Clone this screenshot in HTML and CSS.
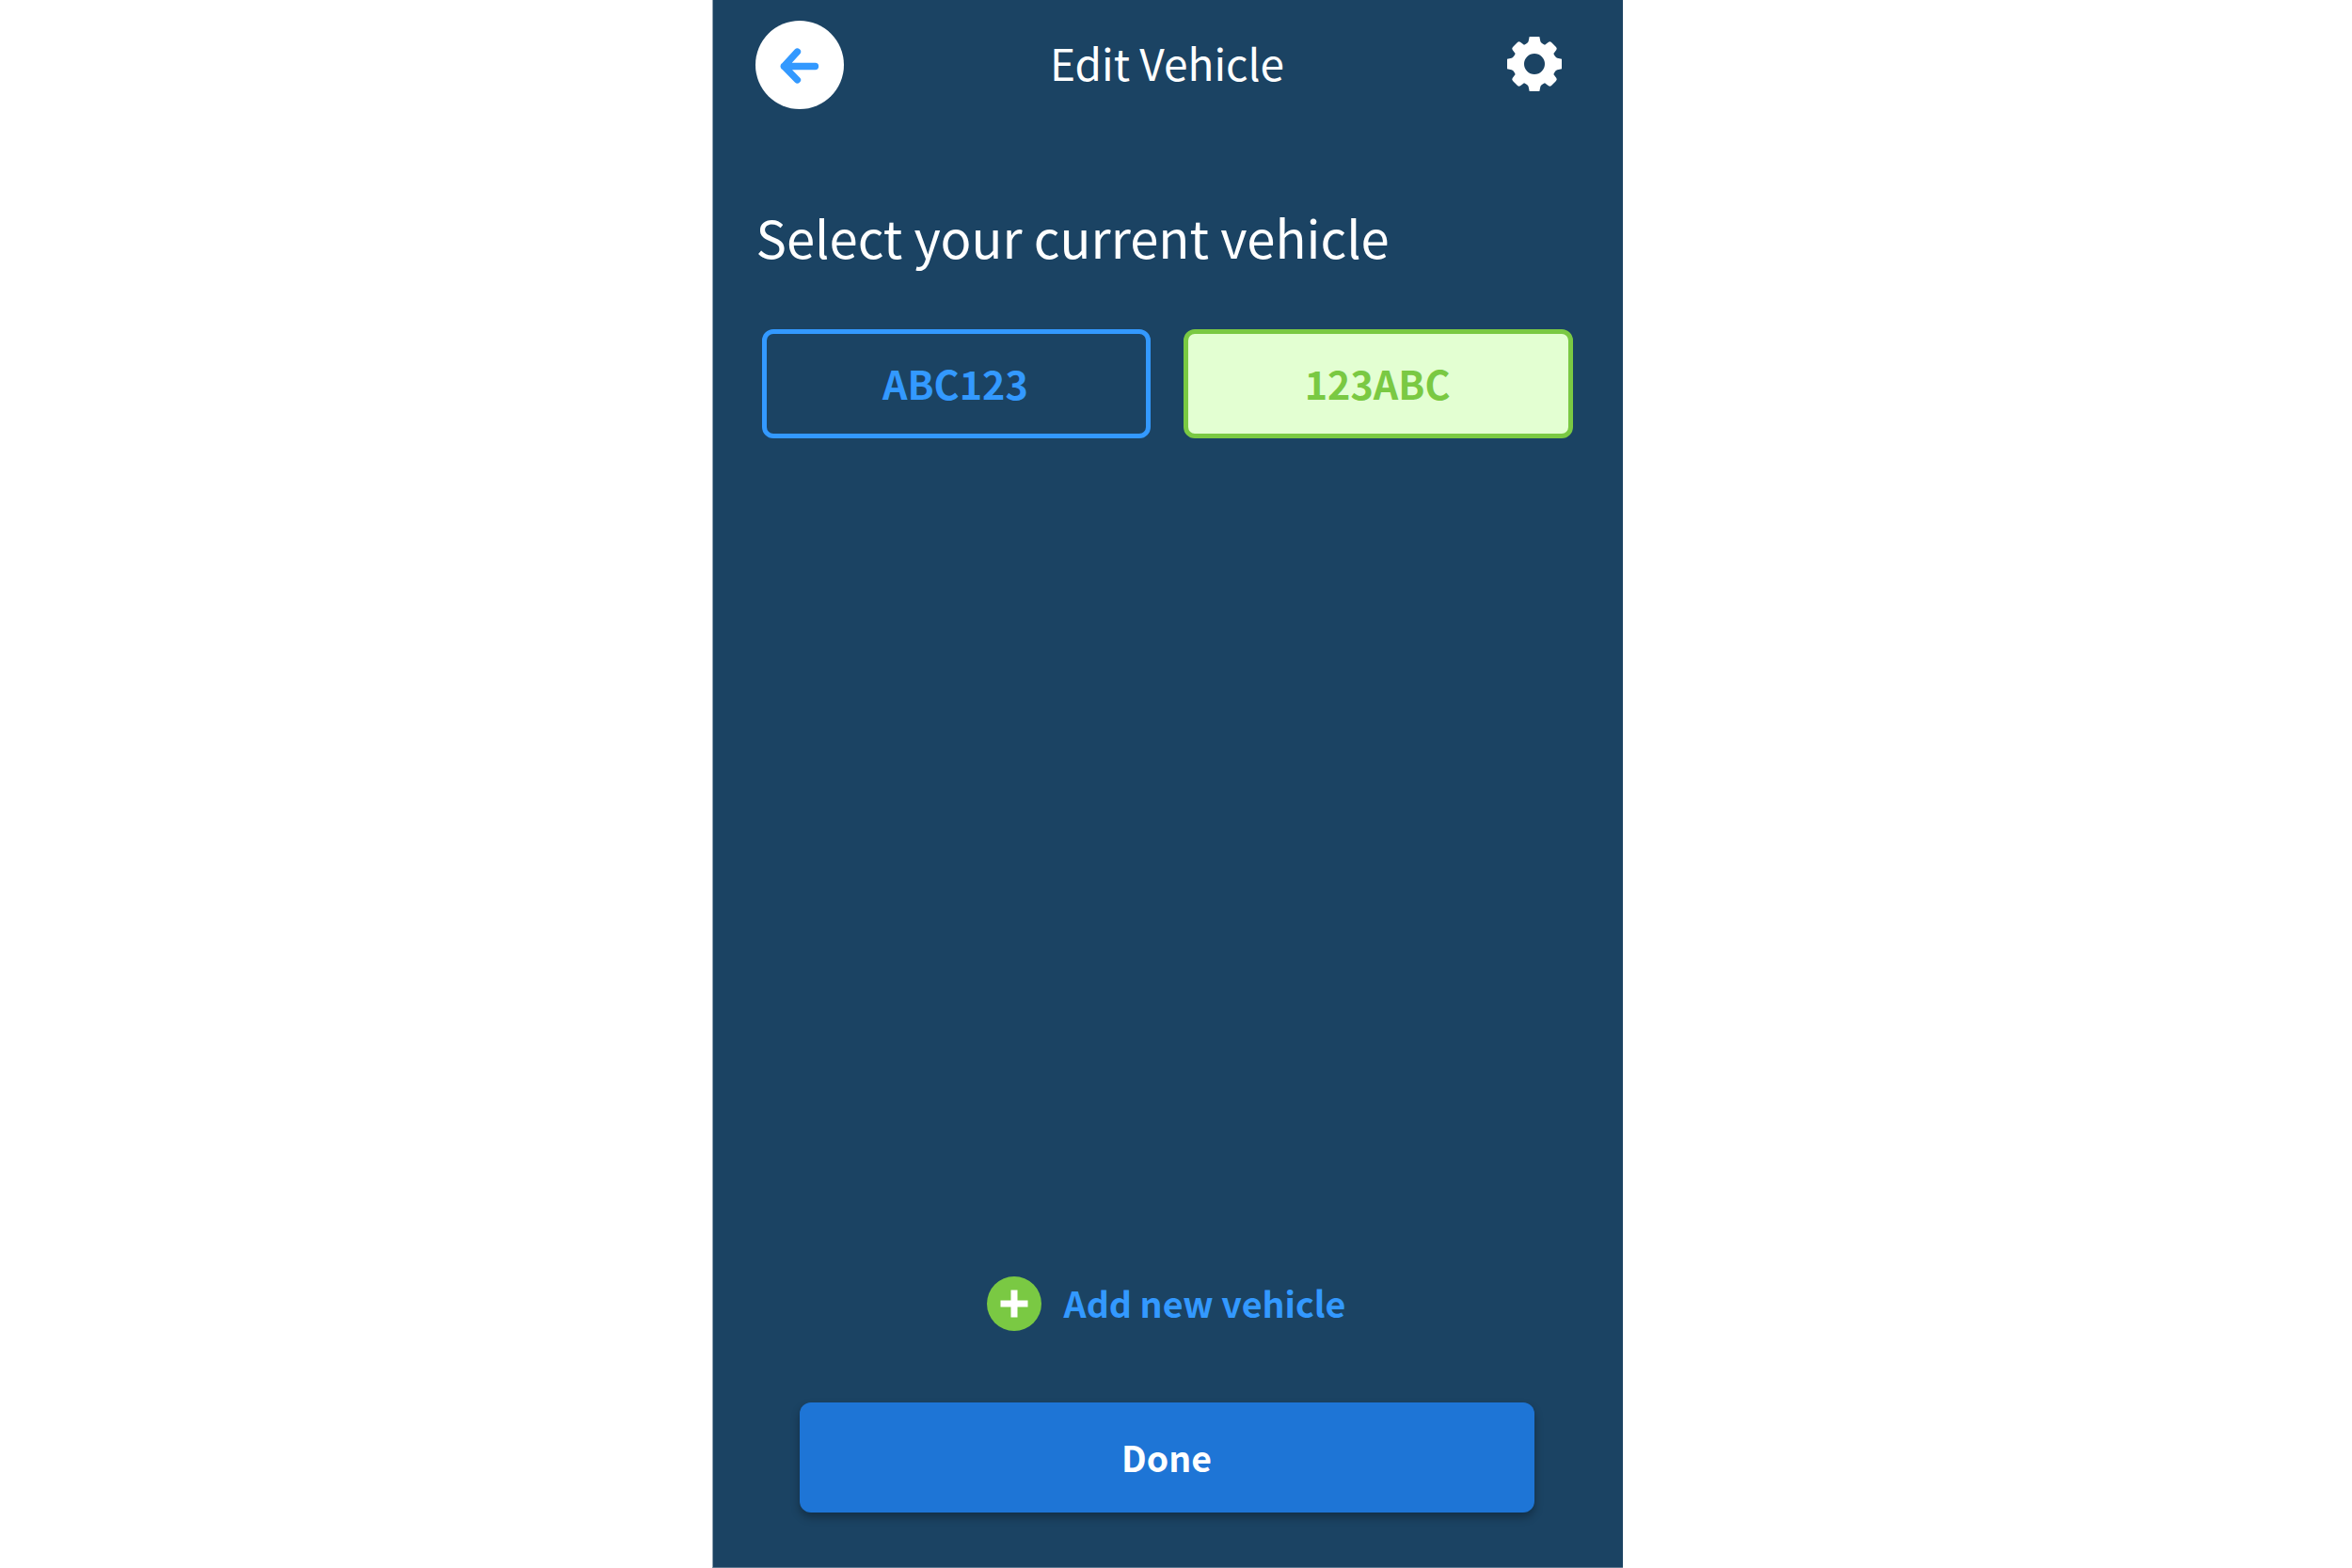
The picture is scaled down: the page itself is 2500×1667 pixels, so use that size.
FILE: index.html
```html
<!DOCTYPE html>
<html lang="en">
<head>
    <meta charset="UTF-8">
    <meta name="viewport" content="width=device-width, initial-scale=1.0">
    <title>Edit Vehicle</title>
    <link rel="stylesheet" href="styles.css">
</head>
<body>
    <div class="container">
        <header>
            <button class="back" aria-label="Back">
                <svg width="42" height="39" viewBox="0 0 42 39">
                    <path d="M18.5 4 L4.3 19.5 L18.5 34 M4.3 19.5 H37.5" />
                </svg>
            </button>
            <h1>Edit Vehicle</h1>
            <button class="settings" aria-label="Settings">
                <svg width="58" height="58" viewBox="-87 -87 174 174">
                    <path fill-rule="evenodd" d="M-16-87H16L19-73Q20-67 33-61L45-70Q50-73 54-69L69-54Q73-50 70-45L61-33Q67-20 73-19L87-16V16L73 19Q67 20 61 33L70 45Q73 50 69 54L54 69Q50 73 45 70L33 61Q20 67 19 73L16 87H-16L-19 73Q-20 67-33 61L-45 70Q-50 73-54 69L-69 54Q-73 50-70 45L-61 33Q-67 20-73 19L-87 16V-16L-73-19Q-67-20-61-33L-70-45Q-73-50-69-54L-54-69Q-50-73-45-70L-33-61Q-20-67-19-73ZM0-33A33 33 0 1 0 0 33A33 33 0 1 0 0-33Z" />
                </svg>
            </button>
        </header>

        <main>
            <h2>Select your current vehicle</h2>
            <div class="vehicles">
                <button class="vehicle">ABC123</button>
                <button class="vehicle selected">123ABC</button>
            </div>
        </main>

        <footer>
            <button class="add">
                <svg width="58" height="58" viewBox="0 0 58 58">
                    <circle cx="29" cy="29" r="29" />
                    <path d="M14.5 29 H43.5 M29 14.5 V43.5" />
                </svg>
                <span>Add new vehicle</span>
            </button>
            <button class="done">Done</button>
        </footer>
    </div>
</body>
</html>
```
FILE: styles.css
```css
* { box-sizing: border-box; }
body { margin: 0; background-color: #fff; font-family: "Noto Sans CJK SC", "Noto Sans", sans-serif; }
.container {
    display: flex;
    flex-direction: column;
    width: 968px;
    height: 1667px;
    margin-left: 757px;
    background-color: #1b4363;
    border-left: 1px solid #8da0b1;
    border-bottom: 1px solid #5d7a91;
    color: #fff;
}
h1, h2 { margin: 0; font-weight: 400; }
button { padding: 0; border: none; background: none; font-family: inherit; font-weight: 700; cursor: pointer; }
svg { display: block; }

header { display: grid; grid-template-columns: 94px 1fr 94px; align-items: center; height: 138px; padding: 0 45px; }
h1 { padding: 0 2px 6px 0; font-size: 46px; line-height: 60px; text-align: center; }
.back { display: flex; align-items: center; justify-content: center; width: 94px; height: 94px; padding-top: 2px; border-radius: 50%; background-color: #fff; }
.back path { fill: none; stroke: #39f; stroke-width: 7.3; stroke-linecap: round; stroke-linejoin: round; }
.settings { justify-self: end; margin: 0 20px 2px 0; }
.settings path { fill: #fff; }

main { flex: 1; padding: 74px 53px 0 51.5px; }
h2 { margin-left: -6px; font-size: 54.4px; line-height: 80px; }
.vehicles { display: flex; gap: 35px; margin-top: 58px; }
.vehicle { flex: 1; height: 116px; padding: 0 2px 2px 0; border: 5px solid #39f; border-radius: 12px; color: #39f; font-size: 41.3px; line-height: 60px; }
.vehicle.selected { border-color: #7ac943; background-color: #e3ffd2; color: #7ac943; }

footer { display: flex; flex-direction: column; align-items: center; padding: 0 94px 58px 92px; }
.add { display: flex; align-items: center; gap: 24px; margin-bottom: 75px; padding-right: 2px; color: #39f; font-size: 37.6px; line-height: 58px; }
.add span { padding-bottom: 2px; }
.add circle { fill: #7ac943; }
.add path { stroke: #fff; stroke-width: 7; }
.done { width: 100%; height: 117px; padding: 0 1px 2px 0; border-radius: 12px; background-color: #1e75d6; box-shadow: 0 5px 10px rgba(0, 0, 0, 0.3); color: #fff; font-size: 37.4px; line-height: 58px; }
```
